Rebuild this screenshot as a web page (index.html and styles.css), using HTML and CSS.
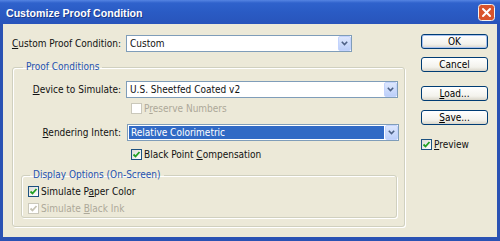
FILE: index.html
```html
<!DOCTYPE html>
<html lang="en">
<head>
  <meta charset="UTF-8">
  <title>Customize Proof Condition</title>
  <link rel="stylesheet" href="styles.css">
</head>
<body>
  <div class="window">
    <div class="titlebar">
      <span class="title">Customize Proof Condition</span>
      <span class="close">
        <svg width="17" height="17" viewBox="0 0 17 17">
          <rect x="0.5" y="0.5" width="16" height="16" rx="3" fill="#d9542b" stroke="#f4f1ee"/>
          <path d="M5 5 L12 12 M12 5 L5 12" stroke="#fff" stroke-width="2" stroke-linecap="round"/>
        </svg>
      </span>
    </div>

    <div class="client">
      <div class="main">
        <div class="row top-row">
          <span class="label"><u>C</u>ustom Proof Condition:</span>
          <div class="combo combo-short">
            <span class="value">Custom</span>
            <span class="arrow"><svg width="7" height="5" viewBox="0 0 7 5"><path d="M0.8 0.8 L3.5 3.5 L6.2 0.8" fill="none" stroke="#4d6185" stroke-width="1.6"/></svg></span>
          </div>
        </div>

        <fieldset class="group proof">
          <legend>Proof Conditions</legend>
          <div class="row device-row">
            <span class="label"><u>D</u>evice to Simulate:</span>
            <div class="combo">
              <span class="value">U.S. Sheetfed Coated v2</span>
              <span class="arrow"><svg width="7" height="5" viewBox="0 0 7 5"><path d="M0.8 0.8 L3.5 3.5 L6.2 0.8" fill="none" stroke="#4d6185" stroke-width="1.6"/></svg></span>
            </div>
          </div>
          <div class="check disabled preserve">
            <span class="box"></span>
            <span>P<u>r</u>eserve Numbers</span>
          </div>
          <div class="row intent-row">
            <span class="label"><u>R</u>endering Intent:</span>
            <div class="combo selected">
              <span class="value">Relative Colorimetric</span>
              <span class="arrow"><svg width="7" height="5" viewBox="0 0 7 5"><path d="M0.8 0.8 L3.5 3.5 L6.2 0.8" fill="none" stroke="#4d6185" stroke-width="1.6"/></svg></span>
            </div>
          </div>
          <div class="check black-point">
            <span class="box"><svg width="9" height="9" viewBox="0 0 9 9"><path d="M1.5 4.5 L3.5 6.5 L7.5 2" fill="none" stroke="#21a121" stroke-width="1.8"/></svg></span>
            <span>Black Point <u>C</u>ompensation</span>
          </div>

          <fieldset class="group display">
            <legend>Display Options (On-Screen)</legend>
            <div class="check paper">
              <span class="box"><svg width="9" height="9" viewBox="0 0 9 9"><path d="M1.5 4.5 L3.5 6.5 L7.5 2" fill="none" stroke="#21a121" stroke-width="1.8"/></svg></span>
              <span>Simulate P<u>a</u>per Color</span>
            </div>
            <div class="check disabled ink">
              <span class="box"><svg width="9" height="9" viewBox="0 0 9 9"><path d="M1.5 4.5 L3.5 6.5 L7.5 2" fill="none" stroke="#c6c3b4" stroke-width="1.8"/></svg></span>
              <span>Simulate <u>B</u>lack Ink</span>
            </div>
          </fieldset>
        </fieldset>
      </div>

      <div class="side">
        <button class="btn default">OK</button>
        <button class="btn cancel">Cancel</button>
        <button class="btn load"><u>L</u>oad...</button>
        <button class="btn save"><u>S</u>ave...</button>
        <div class="check preview">
          <span class="box"><svg width="9" height="9" viewBox="0 0 9 9"><path d="M1.5 4.5 L3.5 6.5 L7.5 2" fill="none" stroke="#21a121" stroke-width="1.8"/></svg></span>
          <span><u>P</u>review</span>
        </div>
      </div>
    </div>
  </div>
</body>
</html>
```

FILE: styles.css
```css
* {
  box-sizing: border-box;
}

body {
  margin: 0;
  font-family: "DejaVu Sans Condensed", "DejaVu Sans", sans-serif;
  font-size: 10px;
  color: #111;
}

.window {
  width: 500px;
  height: 241px;
  display: flex;
  flex-direction: column;
  background: #2a52b3;
}

.titlebar {
  height: 24px;
  display: flex;
  align-items: center;
  justify-content: space-between;
  padding: 1px 5px 0 6px;
  background: linear-gradient(#5584e2 0, #2f62cc 3px, #2a5bc4 50%, #2854bb 100%);
}

.title {
  color: #fff;
  font-family: "Liberation Sans", Arial, sans-serif;
  font-weight: bold;
  font-size: 10.6px;
  text-shadow: 1px 1px 0 #1a3a8a;
}

.close {
  display: flex;
}

.client {
  flex: 1;
  margin: 0 3px 4px;
  background: #ece9d8;
  display: flex;
  gap: 16px;
  padding: 10px 9px 0 8px;
}

.main {
  width: 394px;
}

.row {
  display: flex;
  align-items: center;
  gap: 5px;
}

.top-row {
  margin-top: 1px;
}

.top-row .label {
  width: 110px;
}

.label {
  width: 108px;
  text-align: right;
  white-space: nowrap;
}

.combo {
  width: 272px;
  height: 17px;
  border: 1px solid #7f9db9;
  background: #fff;
  display: flex;
  align-items: stretch;
}

.combo-short {
  width: 226px;
}

.combo .value {
  flex: 1;
  display: flex;
  align-items: center;
  padding-left: 3px;
  white-space: nowrap;
}

.combo.selected .value {
  background: #316ac5;
  color: #fff;
  margin: 1px;
  padding-left: 2px;
}

.arrow {
  width: 13px;
  display: flex;
  align-items: center;
  justify-content: center;
  border: 1px solid #c3d3fd;
  border-radius: 2px;
  background: linear-gradient(#dde7fd, #bccff9);
}

.group {
  margin: 0;
  padding: 0;
  min-inline-size: 0;
  border: 1px solid #d0d0bf;
  border-radius: 3px;
  box-shadow: 1px 1px 0 #fff, inset 1px 1px 0 #fff;
}

.group legend {
  padding: 0 3px;
  line-height: 12px;
  color: #2452b0;
}

.proof {
  margin: 9px 0 0 1px;
  width: 393px;
}

.proof > legend {
  margin-left: 10px;
}

.display {
  margin: 8px 7px 8px 8px;
  padding-bottom: 2px;
}

.display > legend {
  margin-left: 8px;
}

.device-row {
  margin-top: 8px;
}

.intent-row {
  margin-top: 9px;
}

.intent-row .combo {
  margin-left: 1px;
}

.check {
  height: 13px;
  display: flex;
  align-items: center;
  gap: 2px;
  white-space: nowrap;
}

.box {
  width: 11px;
  height: 11px;
  border: 1px solid #1c5180;
  background: linear-gradient(135deg, #dcdcd7, #fff);
  display: flex;
  align-items: center;
  justify-content: center;
}

.check.disabled {
  color: #aca899;
}

.check.disabled .box {
  border-color: #cac8bb;
  background: #fff;
}

.preserve {
  margin-top: 4px;
  padding-left: 118px;
}

.black-point {
  margin-top: 7px;
  padding-left: 118px;
}

.paper {
  margin-top: 4px;
  padding-left: 6px;
}

.ink {
  margin-top: 4px;
  padding-left: 6px;
}

.side {
  width: 67px;
  display: flex;
  flex-direction: column;
}

.btn {
  height: 15px;
  padding: 0;
  font-family: inherit;
  font-size: 10px;
  color: #000;
  border: 1px solid #003c74;
  border-radius: 3px;
  background: linear-gradient(#fff, #f3f2ec 70%, #d9d5c9);
}

.btn.default {
  box-shadow: inset 0 0 0 1px #a9c2ef;
}

.cancel {
  margin-top: 8px;
}

.load {
  margin-top: 14px;
}

.save {
  margin-top: 9px;
}

.preview {
  margin-top: 13px;
}
```
